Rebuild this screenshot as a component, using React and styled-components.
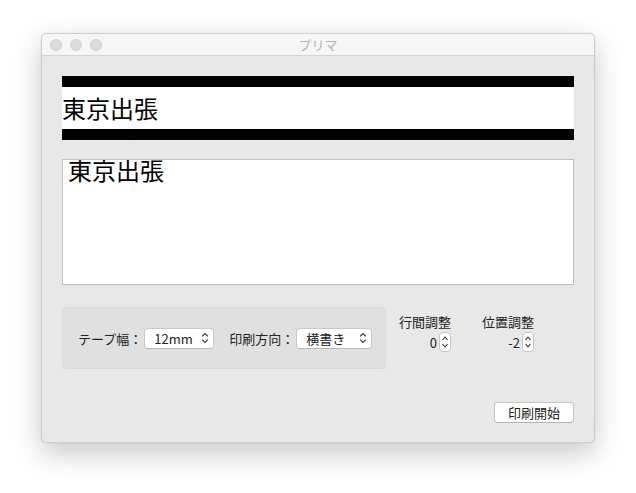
import React, { useState } from 'react';
import styled, { createGlobalStyle } from 'styled-components';

const GlobalStyle = createGlobalStyle`
	html, body {
		margin: 0;
		padding: 0;
		background: #ffffff;
	}
	body {
		font-family: "Noto Sans CJK JP", "Noto Sans", sans-serif;
		color: #1a1a1a;
	}
`;

const Page = styled.div`
	width: 636px;
	height: 493px;
	padding: 33px 0 0 41px;
	box-sizing: border-box;
`;

const Window = styled.div`
	width: 554px;
	height: 410px;
	border-radius: 5px;
	background: #e8e8e8;
	border: 1px solid #cfcfcf;
	box-sizing: border-box;
	box-shadow: 0 10px 28px rgba(0, 0, 0, 0.22), 0 0 1px rgba(0, 0, 0, 0.2);
	display: flex;
	flex-direction: column;
	overflow: hidden;
`;

const TitleBar = styled.div`
	height: 21px;
	flex: none;
	background: #f6f6f6;
	border-bottom: 1px solid #d4d4d4;
	display: flex;
	align-items: center;
	padding-left: 8px;
	position: relative;
`;

const Light = styled.span`
	width: 12px;
	height: 12px;
	border-radius: 50%;
	background: #dcdcdc;
	border: 1px solid #d2d2d2;
	box-sizing: border-box;
	margin-right: 8px;
`;

const Title = styled.div`
	position: absolute;
	left: 0;
	right: 0;
	text-align: center;
	font-size: 13px;
	color: #b4b4b4;
	pointer-events: none;
`;

const Content = styled.div`
	flex: 1;
	padding: 20px 20px 0 20px;
	display: flex;
	flex-direction: column;
`;

const Tape = styled.div`
	height: 64px;
	background: #fff;
	border-top: 11px solid #000;
	border-bottom: 11px solid #000;
	box-sizing: border-box;
	display: flex;
	align-items: center;
	font-size: 24px;
	line-height: 1;
	color: #000;
`;

const Editor = styled.textarea`
	margin-top: 19px;
	height: 126px;
	border: 1px solid #c2c2c2;
	background: #fff;
	box-sizing: border-box;
	resize: none;
	outline: none;
	font-family: "Noto Sans CJK JP", sans-serif;
	font-size: 24px;
	line-height: 20px;
	padding: 0 5px;
	color: #000;
`;

const Controls = styled.div`
	margin-top: 22px;
	display: flex;
	align-items: flex-start;
`;

const Group = styled.div`
	width: 324px;
	height: 62px;
	background: #e0e0e0;
	border: 1px solid #d9d9d9;
	border-radius: 4px;
	box-sizing: border-box;
	display: flex;
	align-items: center;
	padding-left: 15px;
`;

const Label = styled.span`
	font-size: 13px;
	color: #222;
	margin-right: 2px;
	margin-left: ${p => p.$gap || 0}px;
`;

const Select = styled.div`
	width: ${p => p.$w}px;
	height: 21px;
	background: #fff;
	border: 1px solid #c8c8c8;
	border-bottom-color: #b8b8b8;
	border-radius: 4px;
	box-sizing: border-box;
	display: flex;
	align-items: center;
	justify-content: space-between;
	padding: 0 4px 0 ${p => p.$pl || 7}px;
	font-size: 13px;
	color: #222;
`;

const Chevron = () => (
	<svg width="8" height="12" viewBox="0 0 8 12">
		<path d="M1.2 4.3 L4 1.5 L6.8 4.3 M1.2 7.7 L4 10.5 L6.8 7.7" fill="none" stroke="#333" strokeWidth="1.2" />
	</svg>
);

const Adjust = styled.div`
	display: flex;
	flex-direction: column;
	align-items: flex-end;
	margin-left: ${p => p.$ml}px;
	margin-top: 6px;
`;

const AdjustLabel = styled.div`
	font-size: 13px;
	color: #222;
	line-height: 18px;
`;

const StepRow = styled.div`
	display: flex;
	align-items: center;
	margin-top: 1px;
	font-size: 13px;
	color: #222;
`;

const Stepper = styled.div`
	width: 12px;
	height: 20px;
	background: #fff;
	border: 1px solid #c6c6c6;
	border-radius: 4px;
	box-sizing: border-box;
	margin-left: 2px;
	display: flex;
	align-items: center;
	justify-content: center;
`;

const StepIcon = () => (
	<svg width="8" height="16" viewBox="0 0 8 16">
		<path d="M1.5 6 L4 3 L6.5 6 M1.5 10 L4 13 L6.5 10" fill="none" stroke="#333" strokeWidth="1.1" />
	</svg>
);

const Footer = styled.div`
	margin-top: 33px;
	display: flex;
	justify-content: flex-end;
`;

const Button = styled.button`
	width: 80px;
	height: 21px;
	background: #fff;
	border: 1px solid #c6c6c6;
	border-bottom-color: #b4b4b4;
	border-radius: 4px;
	font-family: "Noto Sans CJK JP", sans-serif;
	font-size: 13px;
	color: #222;
	padding: 0;
	line-height: 1;
`;

export default function App() {
	const [text, setText] = useState('東京出張');
	return (
		<Page>
			<GlobalStyle />
			<Window>
				<TitleBar>
					<Light />
					<Light />
					<Light />
					<Title>プリマ</Title>
				</TitleBar>
				<Content>
					<Tape>{text}</Tape>
					<Editor value={text} onChange={e => setText(e.target.value)} />
					<Controls>
						<Group>
							<Label>テープ幅：</Label>
							<Select $w={70} $pl={9}>
								12mm
								<Chevron />
							</Select>
							<Label $gap={15}>印刷方向：</Label>
							<Select $w={76} $pl={9}>
								横書き
								<Chevron />
							</Select>
						</Group>
						<Adjust $ml={13}>
							<AdjustLabel>行間調整</AdjustLabel>
							<StepRow>
								0
								<Stepper><StepIcon /></Stepper>
							</StepRow>
						</Adjust>
						<Adjust $ml={31}>
							<AdjustLabel>位置調整</AdjustLabel>
							<StepRow>
								-2
								<Stepper><StepIcon /></Stepper>
							</StepRow>
						</Adjust>
					</Controls>
					<Footer>
						<Button>印刷開始</Button>
					</Footer>
				</Content>
			</Window>
		</Page>
	);
}
